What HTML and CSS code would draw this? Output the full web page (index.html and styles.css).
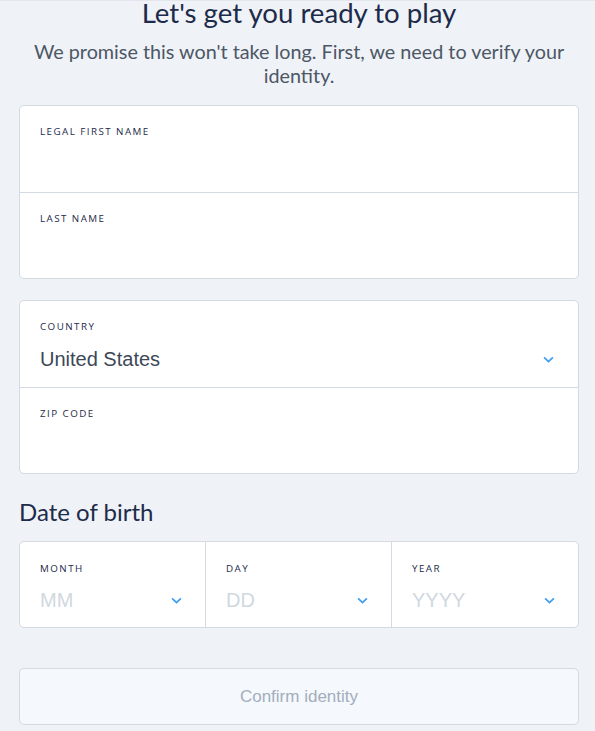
FILE: index.html
```html
<!DOCTYPE html>
<html lang="en">
<head>
    <meta charset="UTF-8">
    <meta name="viewport" content="width=device-width,initial-scale=1.0">
    <title>Verify identity</title>
    <link rel="stylesheet" href="styles.css">
</head>
<body>
    <div class="container">
        <header>
            <h1>Let's get you ready to play</h1>
            <p>We promise this won't take long. First, we need to verify your identity.</p>
        </header>

        <section class="card">
            <div class="field">
                <label>Legal first name</label>
                <div class="value"></div>
            </div>
            <div class="field">
                <label>Last name</label>
                <div class="value"></div>
            </div>
        </section>

        <section class="card">
            <div class="field select">
                <label>Country</label>
                <div class="value">United States</div>
                <svg class="chevron" viewBox="0 0 10 6"><path d="M1 1l4 4 4-4"/></svg>
            </div>
            <div class="field">
                <label>Zip code</label>
                <div class="value"></div>
            </div>
        </section>

        <h2>Date of birth</h2>
        <section class="card dob">
            <div class="field select">
                <label>Month</label>
                <div class="value placeholder">MM</div>
                <svg class="chevron" viewBox="0 0 10 6"><path d="M1 1l4 4 4-4"/></svg>
            </div>
            <div class="field select">
                <label>Day</label>
                <div class="value placeholder">DD</div>
                <svg class="chevron" viewBox="0 0 10 6"><path d="M1 1l4 4 4-4"/></svg>
            </div>
            <div class="field select">
                <label>Year</label>
                <div class="value placeholder">YYYY</div>
                <svg class="chevron" viewBox="0 0 10 6"><path d="M1 1l4 4 4-4"/></svg>
            </div>
        </section>

        <button class="confirm" disabled>Confirm identity</button>
    </div>
</body>
</html>
```

FILE: styles.css
```css
*{
    margin: 0;
    padding: 0;
    box-sizing: border-box;
}
body{
    font-family: Lato, 'Open Sans', sans-serif;
    background-color: #eff2f7;
    border-top: 1px solid #e3e7ed;
}
.container{
    padding: 0 16px 0 19px;
}
header{
    text-align: center;
}
header h1{
    font-weight: 400;
    font-size: 27.6px;
    line-height: 24px;
    color: #1d2b4a;
}
header p{
    font-size: 19.8px;
    line-height: 24px;
    color: #4d5765;
    margin-top: 14px;
}
.card{
    background-color: white;
    border: 1px solid #d4dae2;
    border-radius: 5px;
    margin-top: 21px;
}
header + .card{
    margin-top: 18px;
}
.field{
    height: 86px;
    padding: 19px 20px 0;
    position: relative;
}
.field + .field{
    border-top: 1px solid #d4dae2;
}
.field label{
    display: block;
    font-family: 'Open Sans', sans-serif;
    font-size: 9.8px;
    letter-spacing: 1.45px;
    text-transform: uppercase;
    color: #1d2b4a;
    line-height: 14px;
}
.field .value{
    font-family: 'Liberation Sans', Arial, sans-serif;
    font-size: 20px;
    color: #3d4857;
    margin-top: 13px;
    line-height: 24px;
}
.field .placeholder{
    color: #d0d8e0;
}
.chevron{
    position: absolute;
    right: 24px;
    top: 55px;
    width: 11px;
    height: 7px;
    fill: none;
    stroke: #3a9cf3;
    stroke-width: 1.5;
}
h2{
    font-weight: 400;
    font-size: 24px;
    line-height: 30px;
    color: #1d2b4a;
    margin-top: 23px;
}
.card.dob{
    display: grid;
    grid-template-columns: 185px 186px 1fr;
    margin-top: 14px;
}
.card.dob .field + .field{
    border-top: none;
    border-left: 1px solid #d4dae2;
}
.card.dob .chevron{
    right: 23px;
    top: 55px;
}
.card.dob .field{
    padding-top: 20px;
    height: 85px;
}
.card.dob .value{
    margin-top: 12px;
}
.confirm{
    display: block;
    width: 100%;
    height: 57px;
    margin-top: 40px;
    background-color: #f5f8fc;
    border: 1px solid #d4dae2;
    border-radius: 5px;
    font-family: 'Liberation Sans', Arial, sans-serif;
    font-size: 17px;
    color: #a2aebd;
}
```
